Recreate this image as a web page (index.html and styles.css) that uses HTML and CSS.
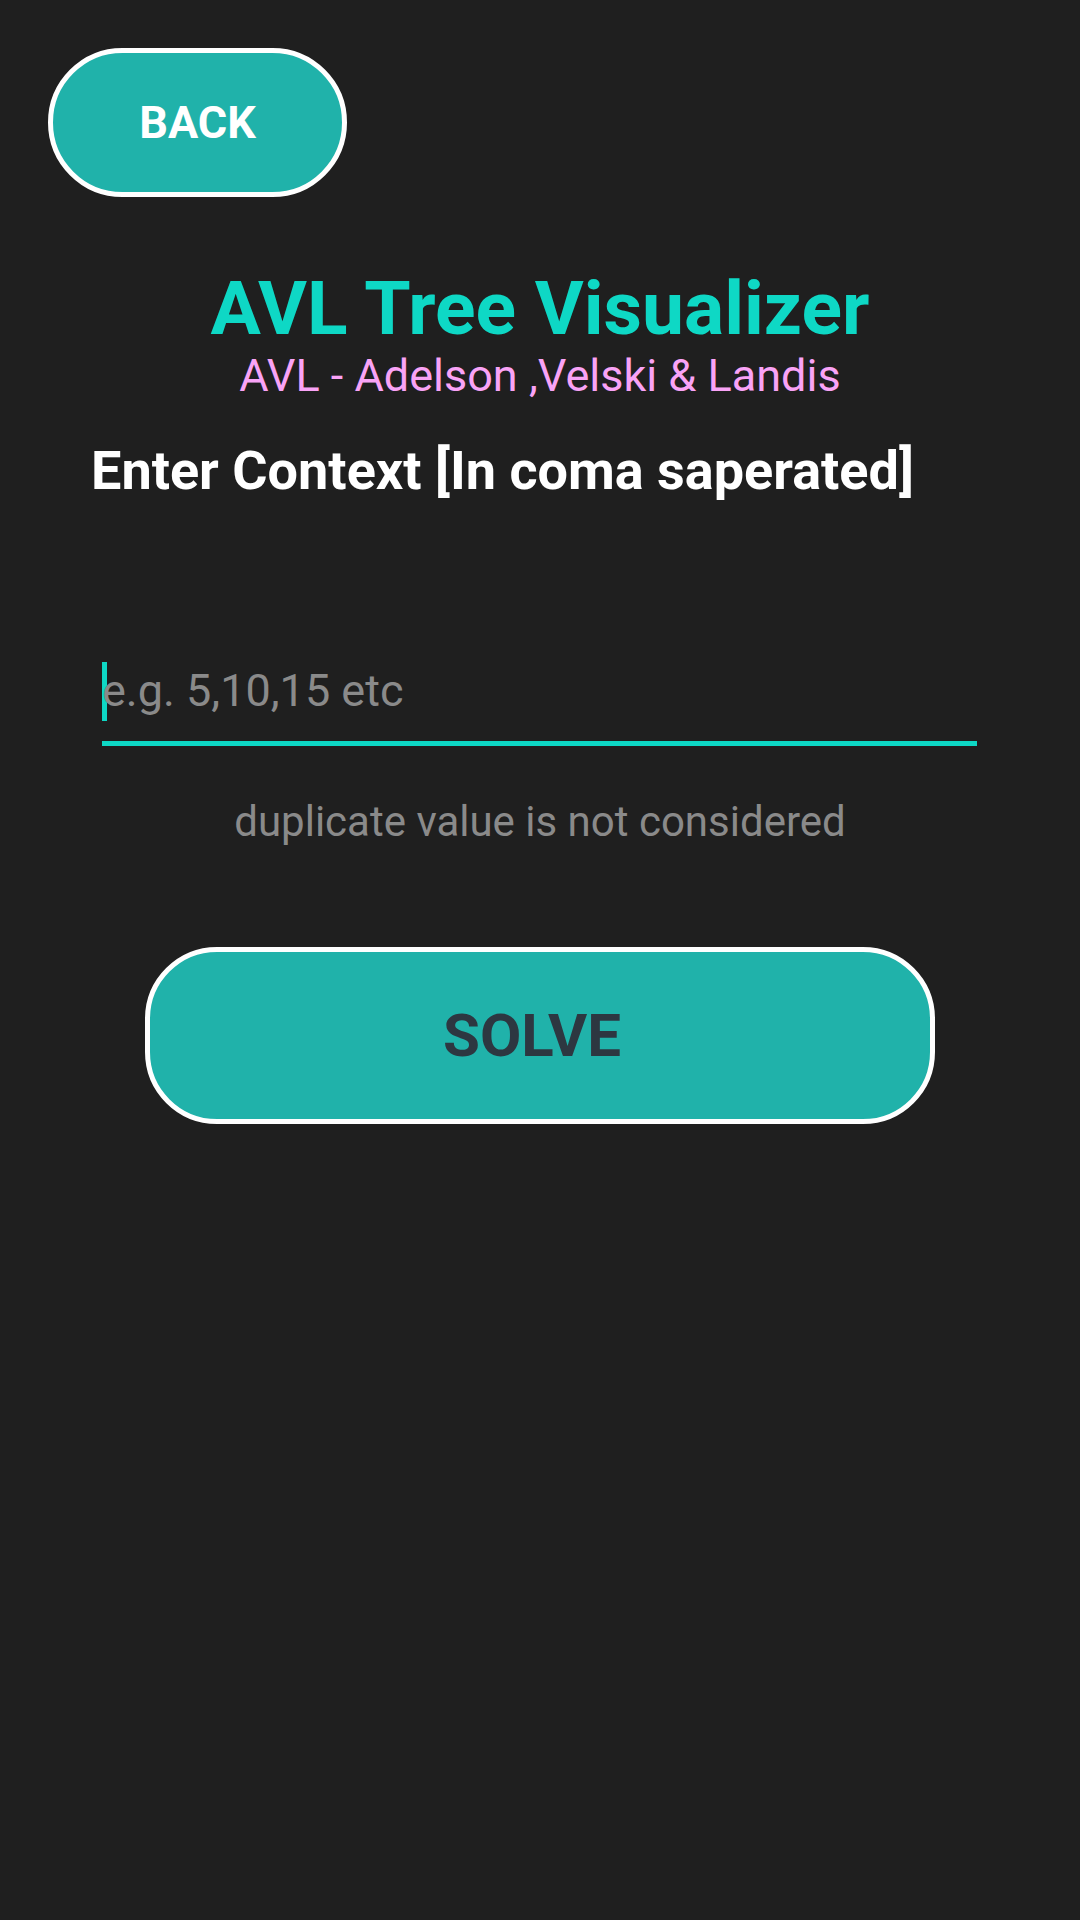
FILE: index.html
```html
<!DOCTYPE html>
<html>
<head>
<meta charset="utf-8">
<link rel="stylesheet" href="styles.css">
</head>
<body>
<div class="page">
  <div class="top">
    <button class="back">BACK</button>
  </div>
  <h1 class="title">AVL Tree Visualizer</h1>
  <div class="subtitle">AVL - Adelson ,Velski &amp; Landis</div>
  <div class="label">Enter Context [In coma saperated]</div>
  <div class="field">
    <div class="field-line"><span class="caret"></span><span class="placeholder">e.g. 5,10,15 etc</span></div>
    <div class="underline"></div>
  </div>
  <div class="hint">duplicate value is not considered</div>
  <div class="solve-row">
    <button class="solve">SOLVE</button>
  </div>
</div>
</body>
</html>
```

FILE: styles.css
```css
html, body {
  margin: 0;
  padding: 0;
  background: #1f1f1f;
}
body {
  width: 1080px;
  height: 1920px;
  font-family: Roboto, "Noto Sans", sans-serif;
}
.page {
  display: flex;
  flex-direction: column;
}
.top {
  padding: 48px 0 0 48px;
  display: flex;
}
.back {
  box-sizing: border-box;
  width: 299px;
  height: 149px;
  border: 5px solid #ffffff;
  border-radius: 75px;
  background: #20b2aa;
  color: #ffffff;
  font-family: Roboto, sans-serif;
  font-weight: 700;
  font-size: 45px;
  padding: 0;
}
.title {
  margin: 69px 0 0 0;
  text-align: center;
  color: #0ed8c5;
  font-weight: 700;
  font-size: 75px;
  line-height: 84px;
}
.subtitle {
  text-align: center;
  color: #f9a3f6;
  font-size: 45px;
  line-height: 52px;
}
.label {
  margin: 37px 0 0 91px;
  color: #ffffff;
  font-weight: 700;
  font-size: 54px;
  line-height: 64px;
}
.field {
  margin: 158px 0 0 102px;
  width: 875px;
  display: flex;
  flex-direction: column;
}
.field-line {
  display: flex;
  align-items: center;
  height: 60px;
}
.caret {
  width: 5px;
  height: 59px;
  background: #0ed8c5;
  margin-right: -5px;
}
.placeholder {
  color: #8a8a8a;
  font-size: 45px;
  line-height: 60px;
}
.underline {
  margin-top: 20px;
  height: 5px;
  background: #0ed8c5;
}
.hint {
  margin-top: 48px;
  text-align: center;
  color: #8a8a8a;
  font-size: 42px;
  line-height: 56px;
}
.solve-row {
  margin-top: 97px;
  display: flex;
  padding-left: 145px;
}
.solve {
  box-sizing: border-box;
  width: 790px;
  height: 177px;
  border: 5px solid #ffffff;
  border-radius: 72px;
  background: #20b2aa;
  color: #2d3741;
  font-family: Roboto, sans-serif;
  font-weight: 700;
  font-size: 60px;
  padding: 0 16px 0 0;
}
```
